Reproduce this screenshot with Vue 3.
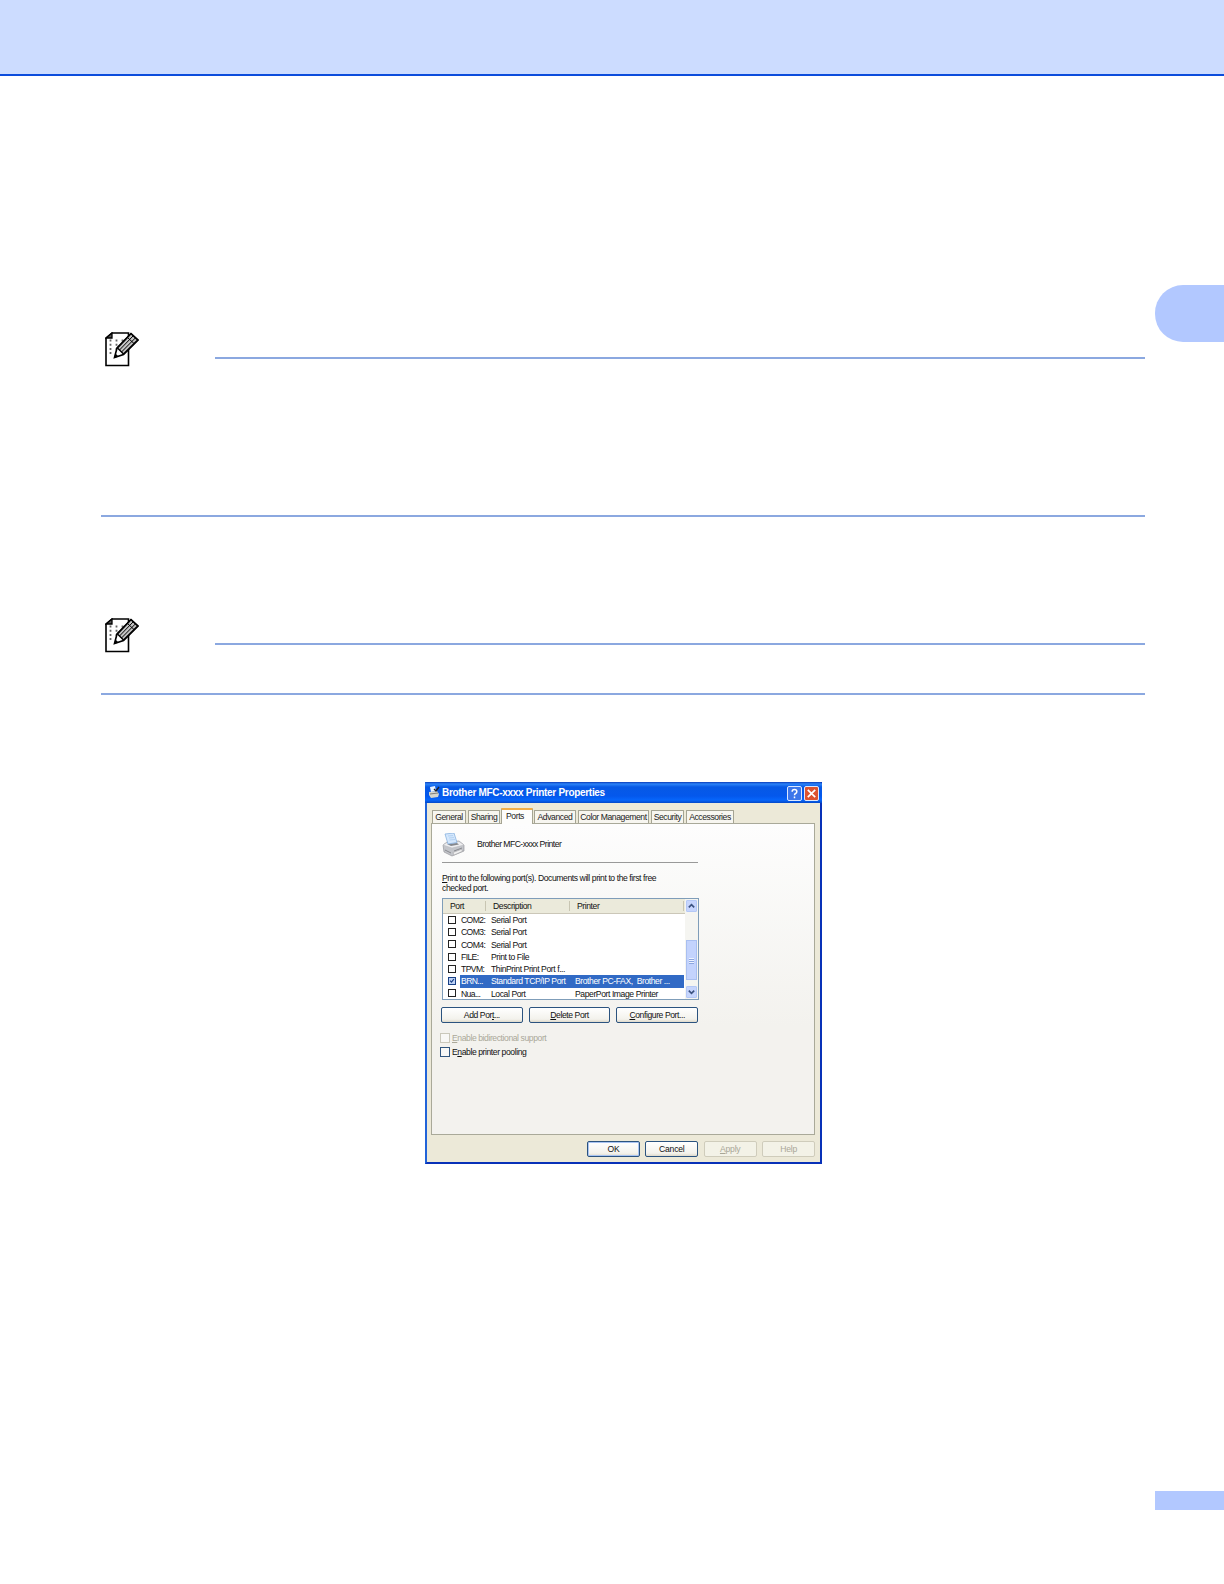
<script setup>
import { ref } from 'vue'

const tabs = ['General', 'Sharing', 'Ports', 'Advanced', 'Color Management', 'Security', 'Accessories']
const activeTab = ref('Ports')

const ports = ref([
  { name: 'COM2:', description: 'Serial Port', printer: '', checked: false },
  { name: 'COM3:', description: 'Serial Port', printer: '', checked: false },
  { name: 'COM4:', description: 'Serial Port', printer: '', checked: false },
  { name: 'FILE:', description: 'Print to File', printer: '', checked: false },
  { name: 'TPVM:', description: 'ThinPrint Print Port f...', printer: '', checked: false },
  { name: 'BRN...', description: 'Standard TCP/IP Port', printer: 'Brother PC-FAX,  Brother ...', checked: true },
  { name: 'Nua...', description: 'Local Port', printer: 'PaperPort Image Printer', checked: false }
])
const selectedPort = ref('BRN...')
const notes = ['note-first', 'note-second']
</script>

<template>
  <div class="page">
    <header class="page-header"></header>
    <div class="chapter-tab"></div>

    <section v-for="note in notes" :key="note" class="note" :class="note">
      <div class="note-head">
        <svg class="note-icon" viewBox="0 0 34 35">
          <path d="M7 1H23.5V33.5H1V6Z" fill="#fff" stroke="#000" stroke-width="1.6" />
          <path d="M1 6L7 1V6Z" fill="#555" stroke="#000" stroke-width="1.3" />
          <path d="M5.5 7.5V22M11.5 7.5V18M17.5 7.5V10" stroke="#666" stroke-width="1.8" stroke-dasharray="2 2.2" />
          <path d="M9.5 25.5L12 16L26 1.5L33 8L18.5 22.5Z" fill="#fff" stroke="#000" stroke-width="1.6" />
          <path d="M12.5 16L26 1.8L32.6 8L18.5 22Z" fill="#c4c4c4" stroke="#000" stroke-width="1.4" />
          <path d="M14.5 18L28 4M16.5 20L30.3 6M22.5 5.5L29 11.5" stroke="#000" stroke-width="1" />
          <path d="M9 26L10.5 21.5L13.5 24.5Z" fill="#000" />
        </svg>
        <div class="rule"></div>
      </div>
      <div class="rule"></div>
    </section>

    <div class="dialog">
      <div class="title-bar">
        <svg class="title-icon" viewBox="0 0 12 12">
          <path d="M2 1L7 0L8 5L3 6Z" fill="#e9f3ff" />
          <path d="M1 6L9 5L11 8L10 11L3 12L1 9Z" fill="#d5d5cc" />
          <path d="M2 8L10 7" stroke="#666" stroke-width="0.8" />
          <path d="M6 3L8 5L11 1" fill="none" stroke="#222" stroke-width="1.3" />
        </svg>
        <span class="title">Brother MFC-xxxx Printer Properties</span>
        <button class="title-button help">
          <svg viewBox="0 0 14 14"><path d="M4.5 5Q4.5 2.8 7 2.8Q9.5 2.8 9.5 5Q9.5 6.3 8 7Q7 7.5 7 9M7 10.2V12" fill="none" stroke="#fff" stroke-width="1.6" /></svg>
        </button>
        <button class="title-button close">
          <svg viewBox="0 0 14 14"><path d="M3 3L11 11M11 3L3 11" stroke="#fff" stroke-width="1.8" /></svg>
        </button>
      </div>

      <div class="dialog-body">
        <nav class="tabs">
          <button
            v-for="tab in tabs"
            :key="tab"
            class="tab"
            :class="[tab.toLowerCase().replace(' ', '-'), { active: tab === activeTab }]"
            v-on:click="activeTab = tab"
          >
            {{ tab }}
          </button>
        </nav>

        <div class="panel">
          <div class="printer-row">
            <svg class="printer-icon" viewBox="0 0 23 24">
              <path d="M1 12L5 9L17 8L22 12V18L10 23L2 19Z" fill="#c3c5ca" stroke="#8b8c90" stroke-width="0.6" />
              <path d="M1 12L10 15L22 12L17 8.5L5 9.5Z" fill="#eeeef0" stroke="#b5b6ba" stroke-width="0.5" />
              <path d="M5 11L15 10L17 11.5L9 13Z" fill="#85878c" />
              <path d="M3 1L12 0L15 9.5L6 11Z" fill="#d4e7fc" stroke="#7caadb" stroke-width="0.7" />
              <path d="M6 3L11 2.5M7 5L12 4.5M7.5 7L13 6.5" stroke="#a5c8ee" stroke-width="0.7" />
              <path d="M3 17L9 20M12 18L20 15" stroke="#77797e" stroke-width="0.8" />
              <path d="M11 19.5L19 16.5L21 18L12 22Z" fill="#f1f1f1" stroke="#9c9da0" stroke-width="0.5" />
            </svg>
            <span class="printer-name">Brother MFC-xxxx Printer</span>
          </div>
          <p class="hint">
            <span class="hint-line"><u>P</u>rint to the following port(s). Documents will print to the first free</span>
            <span class="hint-line">checked port.</span>
          </p>

          <div class="port-list">
            <div class="port-table">
              <div class="port-header">
                <span>Port</span>
                <span>Description</span>
                <span>Printer</span>
              </div>
              <div
                v-for="port in ports"
                :key="port.name"
                class="port-row"
                :class="{ selected: port.name === selectedPort }"
                v-on:click="selectedPort = port.name"
              >
                <span class="port-check">
                  <svg v-if="port.checked" viewBox="0 0 8 8"><path d="M1.5 3.5L3.3 5.5L6.5 1.5" fill="none" stroke="#173f85" stroke-width="1.5" /></svg>
                </span>
                <span class="port-name">{{ port.name }}</span>
                <span class="port-description">{{ port.description }}</span>
                <span class="port-printer">{{ port.printer }}</span>
              </div>
            </div>
            <div class="scrollbar">
              <div class="scroll-button">
                <svg viewBox="0 0 10 11"><path d="M2 7L5 4L8 7" fill="none" stroke="#3b5280" stroke-width="1.8" /></svg>
              </div>
              <div class="scroll-track">
                <div class="scroll-thumb"><i></i><i></i><i></i></div>
              </div>
              <div class="scroll-button">
                <svg viewBox="0 0 10 11"><path d="M2 4L5 7L8 4" fill="none" stroke="#3b5280" stroke-width="1.8" /></svg>
              </div>
            </div>
          </div>

          <div class="port-buttons">
            <button class="button"><span>Add Por<u>t</u>...</span></button>
            <button class="button"><span><u>D</u>elete Port</span></button>
            <button class="button"><span><u>C</u>onfigure Port...</span></button>
          </div>

          <div class="option disabled"><i class="box"></i><span><u>E</u>nable bidirectional support</span></div>
          <div class="option"><i class="box"></i><span>E<u>n</u>able printer pooling</span></div>
        </div>

        <div class="dialog-buttons">
          <button class="button default">OK</button>
          <button class="button">Cancel</button>
          <button class="button disabled"><span><u>A</u>pply</span></button>
          <button class="button disabled">Help</button>
        </div>
      </div>
    </div>

    <div class="page-number"></div>
  </div>
</template>

<style>
body {
  background: #fff;
}
</style>

<style scoped>
* {
  box-sizing: border-box;
}

.page {
  position: relative;
  width: 1224px;
  height: 1584px;
  overflow: hidden;
  display: flex;
  flex-direction: column;
  background: #fff;
  font-family: 'Liberation Sans', Arial, sans-serif;
  font-size: 8.6px;
  line-height: 10px;
  letter-spacing: -0.42px;
  color: #111;
}

.page-header {
  height: 76px;
  flex: none;
  background: #ccdcff;
  border-bottom: 2px solid #0b4cdc;
}

/* thumb index on the outer edge */
.chapter-tab {
  position: absolute;
  top: 285px;
  right: 0;
  width: 69px;
  height: 57px;
  background: #b2c8ff;
  border-radius: 28px 0 0 28px;
}

.note {
  width: 1044px;
  margin-left: 101px;
  display: flex;
  flex-direction: column;
  justify-content: space-between;
  flex: none;
}

.note-first {
  margin-top: 256px;
  height: 185px;
}

.note-second {
  margin-top: 101px;
  height: 77px;
}

.note-head {
  display: flex;
  align-items: flex-start;
  height: 35px;
}

.note-icon {
  width: 34px;
  height: 35px;
  margin-left: 4px;
}

.rule {
  height: 2px;
  background: #8ba8e0;
}

.note-head .rule {
  flex: 1;
  margin: 25px 0 0 76px;
}

.dialog {
  width: 397px;
  height: 382px;
  margin: 87px 0 0 425px;
  flex: none;
  display: flex;
  flex-direction: column;
  border: solid #0831b8;
  border-width: 0 2px 2px;
  border-left-color: #2163d8;
  background: #ece9d8;
}

.title-bar {
  height: 21px;
  margin: 0 -2px;
  padding: 1px 3px 0 3px;
  display: flex;
  align-items: center;
  flex: none;
  background: linear-gradient(#0a3cb8 0, #2b83f8 2px, #0759e5 5px, #0458ec 14px, #0666fb 18px, #0348c8 21px);
  border-radius: 2px 2px 0 0;
}

.title-icon {
  width: 12px;
  height: 12px;
  margin: 0 2px 2px 0;
}

.title {
  flex: 1;
  color: #fff;
  font-size: 10px;
  font-weight: bold;
  letter-spacing: -0.3px;
  white-space: nowrap;
}

.title-button {
  width: 15px;
  height: 15px;
  padding: 0;
  margin-left: 2px;
  display: flex;
  border: 1px solid #dce8ff;
  border-radius: 2px;
  background: #3c76ea;
}

.title-button svg {
  width: 13px;
  height: 13px;
}

.title-button.close {
  background: #dc5330;
}

.dialog-body {
  flex: 1;
  padding: 5px 5px 0 4px;
  display: flex;
  flex-direction: column;
}

.tabs {
  height: 15px;
  padding-left: 1px;
  display: flex;
  align-items: flex-end;
  gap: 2px;
}

.tab {
  height: 13px;
  padding: 0 0 1px;
  border: 1px solid #a5a493;
  border-bottom: 0;
  border-radius: 1px 1px 0 0;
  background: #f7f6f0;
  font: inherit;
  letter-spacing: inherit;
  color: #222;
  white-space: nowrap;
  display: flex;
  align-items: center;
  justify-content: center;
}

.tab.general { width: 34px; }
.tab.sharing { width: 32px; }
.tab.ports { width: 32px; margin: 0 -1px; }
.tab.advanced { width: 42px; }
.tab.color-management { width: 71px; }
.tab.security { width: 33px; }
.tab.accessories { width: 48px; }

.tab.active {
  height: 16px;
  margin-bottom: -1px;
  padding: 0 4px 2px 0;
  z-index: 1;
  border-top: 2px solid #f0ae48;
  background: #fdfdfc;
}

.panel {
  width: 384px;
  height: 312px;
  padding: 9px 10px 0 10px;
  border: 1px solid #a9a999;
  background: linear-gradient(#fdfdfd, #f3f2ee 65%);
  flex: none;
}

.printer-row {
  width: 256px;
  height: 30px;
  display: flex;
  align-items: flex-start;
  border-bottom: 1px solid #999;
}

.printer-icon {
  width: 23px;
  height: 24px;
}

.printer-name {
  margin: 6px 0 0 12px;
  letter-spacing: -0.53px;
  white-space: nowrap;
}

.hint {
  margin: 10px 0 0;
}

.hint-line {
  display: block;
  white-space: nowrap;
}

.port-list {
  width: 257px;
  height: 102px;
  margin-top: 5px;
  display: flex;
  border: 1px solid #7f9db9;
  background: #fff;
}

.port-table {
  width: 242px;
  overflow: hidden;
}

.port-header {
  height: 15px;
  display: grid;
  grid-template-columns: 43px 84px 114px;
  align-items: center;
  background: #ebeadb;
  border-bottom: 1px solid #cbc7b8;
}

.port-header span {
  height: 10px;
  padding-left: 7px;
  border-right: 1px solid #c8c5b2;
}

.port-row {
  height: 12.3px;
  display: grid;
  grid-template-columns: 17px 30px 84px 110px;
  align-items: center;
  white-space: nowrap;
}

.port-row > span {
  line-height: 12.3px;
  height: 12.3px;
}

.port-row .port-check {
  width: 8px;
  height: 8px;
  margin: 0 0 1px 5px;
  border: 1px solid #222;
  background: #fff;
  display: flex;
}

.port-check svg {
  width: 6px;
  height: 6px;
}

.port-name,
.port-description,
.port-printer {
  padding-left: 1px;
  white-space: pre;
}

.port-name {
  letter-spacing: -0.6px;
}

.selected .port-name,
.selected .port-description,
.selected .port-printer {
  background: #316ac5;
  color: #fff;
}

.selected .port-check {
  border-color: #173f85;
  background: #bdd2f5;
}

.scrollbar {
  width: 13px;
  padding: 1px;
  display: flex;
  flex-direction: column;
  background: #f5f5f1;
}

.scroll-button {
  width: 11px;
  height: 12px;
  background: #c6d5fd;
  border: 1px solid #b4c8f6;
  border-radius: 1px;
  display: flex;
}

.scroll-button svg {
  width: 9px;
  height: 10px;
}

.scroll-track {
  flex: 1;
  padding-top: 28px;
}

.scroll-thumb {
  width: 11px;
  height: 40px;
  border: 1px solid #a9bff0;
  background: #c3d3fd;
  display: flex;
  flex-direction: column;
  align-items: center;
  justify-content: center;
  gap: 1px;
}

.scroll-thumb i {
  width: 5px;
  height: 1px;
  background: #edf3ff;
  box-shadow: 0 1px #8ca6df;
}

.port-buttons {
  width: 257px;
  margin: 7px 0 10px -1px;
  display: flex;
  gap: 6px;
}

.button {
  height: 16px;
  padding: 0;
  border: 1px solid #2b537f;
  border-radius: 2px;
  background: linear-gradient(#fff, #f3f2ec 80%, #dedacb);
  font: inherit;
  letter-spacing: inherit;
  color: #111;
  white-space: nowrap;
}

.port-buttons .button {
  flex: 1;
}

.button.default {
  box-shadow: inset 0 0 0 1px #a9c4f2;
}

.button.disabled {
  border-color: #cfccbb;
  background: #f3f2e7;
  color: #a9a797;
}

.option {
  height: 10px;
  margin: 0 0 4px -2px;
  display: flex;
  align-items: center;
  gap: 2px;
  white-space: nowrap;
}

.option .box {
  width: 10px;
  height: 10px;
  border: 1px solid #31567f;
  background: #f8f8f6;
}

.option.disabled {
  color: #aaa899;
}

.option.disabled .box {
  border-color: #cac8bb;
}

.dialog-buttons {
  margin-top: 6px;
  display: flex;
  justify-content: flex-end;
  gap: 5.6px;
}

.dialog-buttons .button {
  width: 52.8px;
  letter-spacing: -0.2px;
}

.page-number {
  width: 69px;
  height: 19px;
  margin: 327px 0 0 auto;
  flex: none;
  background: #b2c8ff;
}
</style>
